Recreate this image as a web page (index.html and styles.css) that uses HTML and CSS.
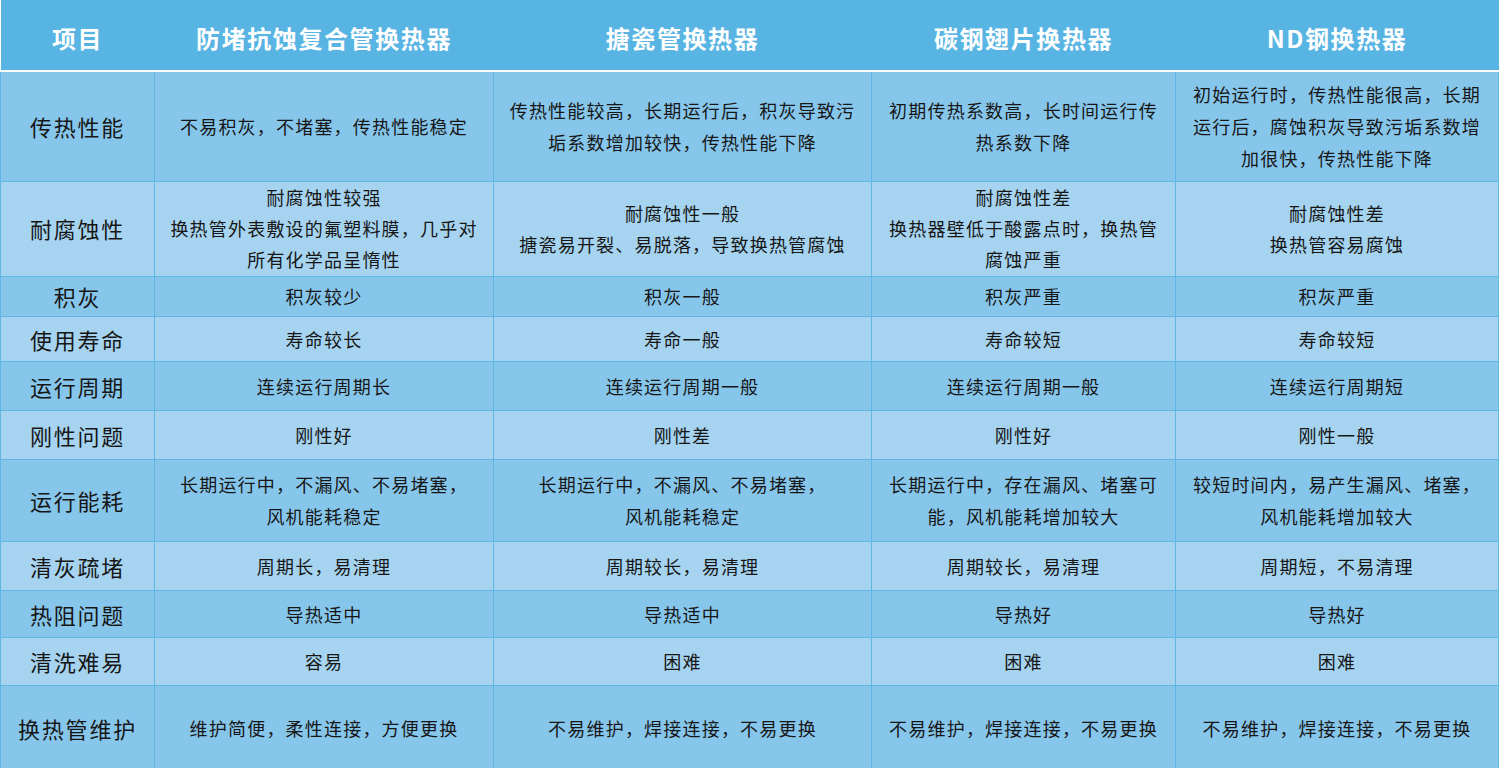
FILE: index.html
```html
<!DOCTYPE html>
<html lang="zh-CN">
<head>
<meta charset="utf-8">
<title>换热器对比</title>
<link rel="stylesheet" href="styles.css">
</head>
<body>
<table class="cmp">
  <colgroup>
    <col class="c0"><col class="c1"><col class="c2"><col class="c3"><col class="c4">
  </colgroup>
  <thead>
    <tr class="head">
      <th>项目</th>
      <th>防堵抗蚀复合管换热器</th>
      <th>搪瓷管换热器</th>
      <th>碳钢翅片换热器</th>
      <th>ND钢换热器</th>
    </tr>
  </thead>
  <tbody>
    <tr class="dark h110">
      <td class="name">传热性能</td>
      <td>不易积灰，不堵塞，传热性能稳定</td>
      <td>传热性能较高，长期运行后，积灰导致污<br>垢系数增加较快，传热性能下降</td>
      <td>初期传热系数高，长时间运行传<br>热系数下降</td>
      <td>初始运行时，传热性能很高，长期<br>运行后，腐蚀积灰导致污垢系数增<br>加很快，传热性能下降</td>
    </tr>
    <tr class="light h95 tight">
      <td class="name">耐腐蚀性</td>
      <td>耐腐蚀性较强<br>换热管外表敷设的氟塑料膜，几乎对<br>所有化学品呈惰性</td>
      <td>耐腐蚀性一般<br>搪瓷易开裂、易脱落，导致换热管腐蚀</td>
      <td>耐腐蚀性差<br>换热器壁低于酸露点时，换热管<br>腐蚀严重</td>
      <td>耐腐蚀性差<br>换热管容易腐蚀</td>
    </tr>
    <tr class="dark h40">
      <td class="name">积灰</td>
      <td>积灰较少</td>
      <td>积灰一般</td>
      <td>积灰严重</td>
      <td>积灰严重</td>
    </tr>
    <tr class="light h45">
      <td class="name">使用寿命</td>
      <td>寿命较长</td>
      <td>寿命一般</td>
      <td>寿命较短</td>
      <td>寿命较短</td>
    </tr>
    <tr class="dark h49">
      <td class="name">运行周期</td>
      <td>连续运行周期长</td>
      <td>连续运行周期一般</td>
      <td>连续运行周期一般</td>
      <td>连续运行周期短</td>
    </tr>
    <tr class="light h49">
      <td class="name">刚性问题</td>
      <td>刚性好</td>
      <td>刚性差</td>
      <td>刚性好</td>
      <td>刚性一般</td>
    </tr>
    <tr class="dark h82">
      <td class="name">运行能耗</td>
      <td>长期运行中，不漏风、不易堵塞，<br>风机能耗稳定</td>
      <td>长期运行中，不漏风、不易堵塞，<br>风机能耗稳定</td>
      <td>长期运行中，存在漏风、堵塞可<br>能，风机能耗增加较大</td>
      <td>较短时间内，易产生漏风、堵塞，<br>风机能耗增加较大</td>
    </tr>
    <tr class="light h49">
      <td class="name">清灰疏堵</td>
      <td>周期长，易清理</td>
      <td>周期较长，易清理</td>
      <td>周期较长，易清理</td>
      <td>周期短，不易清理</td>
    </tr>
    <tr class="dark h47">
      <td class="name">热阻问题</td>
      <td>导热适中</td>
      <td>导热适中</td>
      <td>导热好</td>
      <td>导热好</td>
    </tr>
    <tr class="light h48">
      <td class="name">清洗难易</td>
      <td>容易</td>
      <td>困难</td>
      <td>困难</td>
      <td>困难</td>
    </tr>
    <tr class="dark h90">
      <td class="name">换热管维护</td>
      <td>维护简便，柔性连接，方便更换</td>
      <td>不易维护，焊接连接，不易更换</td>
      <td>不易维护，焊接连接，不易更换</td>
      <td>不易维护，焊接连接，不易更换</td>
    </tr>
  </tbody>
</table>
</body>
</html>
```

FILE: styles.css
```css
html, body {
  margin: 0;
  padding: 0;
  background: #ffffff;
}

body {
  width: 1500px;
  height: 768px;
  overflow: hidden;
  font-family: "Noto Sans CJK SC", "Noto Sans", sans-serif;
  color: #161616;
}

.cmp {
  border-collapse: collapse;
  table-layout: fixed;
  width: 1498px;
}

.c0 { width: 154px; }
.c1 { width: 339px; }
.c2 { width: 378px; }
.c3 { width: 304px; }
.c4 { width: 323px; }

.cmp th,
.cmp td {
  border: 1px solid #5fb6e2;
  text-align: center;
  vertical-align: middle;
  padding: 0 10px;
}

.head {
  height: 71px;
  background: #57b4e3;
}

.head th {
  color: #ffffff;
  font-weight: 700;
  font-size: 24px;
  letter-spacing: 1.6px;
  border-top: none;
  border-left: none;
  border-right: none;
  border-bottom: 2px solid #ffffff;
  padding-top: 4px;
}

.cmp td {
  font-size: 18px;
  line-height: 32px;
  letter-spacing: 1.2px;
}

.cmp .tight td {
  line-height: 31px;
}

.cmp td.name {
  font-size: 22px;
  letter-spacing: 1.8px;
  padding: 0 4px;
}

.dark { background: #87c6eb; }
.light { background: #a6d4f0; }

.h110 { height: 110px; }
.h95 { height: 95px; }
.h40 { height: 40px; }
.h45 { height: 45px; }
.h49 { height: 49px; }
.h82 { height: 82px; }
.h47 { height: 47px; }
.h48 { height: 48px; }
.h90 { height: 86px; }
```
